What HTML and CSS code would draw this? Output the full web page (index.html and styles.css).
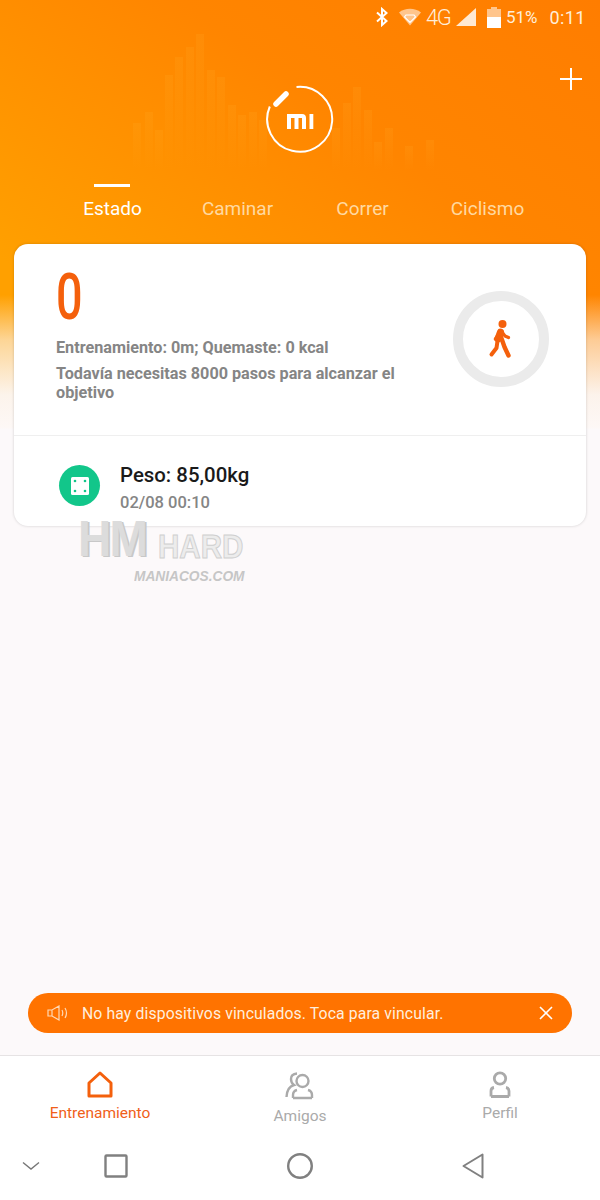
FILE: index.html
```html
<!DOCTYPE html>
<html lang="es">
<head>
    <meta charset="UTF-8">
    <title>Mi Fit - Estado</title>
    <link rel="stylesheet" href="styles.css">
</head>
<body>
    <div class="screen">
        <svg class="bars" width="600" height="200" viewBox="0 0 600 200">
            <defs>
                <linearGradient id="barFade" x1="0" y1="0" x2="0" y2="1">
                    <stop offset="0" stop-color="#ffb432" stop-opacity="0.14"/>
                    <stop offset="1" stop-color="#ffb432" stop-opacity="0"/>
                </linearGradient>
            </defs>
            <g fill="url(#barFade)">
                <rect x="133" y="123" width="8" height="47"/>
                <rect x="145" y="112" width="8" height="58"/>
                <rect x="155" y="130" width="8" height="40"/>
                <rect x="165" y="75" width="8" height="95"/>
                <rect x="175" y="57" width="8" height="113"/>
                <rect x="186" y="47" width="8" height="123"/>
                <rect x="196" y="34" width="8" height="136"/>
                <rect x="207" y="70" width="8" height="100"/>
                <rect x="217" y="77" width="8" height="93"/>
                <rect x="228" y="105" width="8" height="65"/>
                <rect x="238" y="115" width="8" height="55"/>
                <rect x="249" y="112" width="8" height="58"/>
                <rect x="259" y="120" width="8" height="50"/>
                <rect x="332" y="128" width="8" height="42"/>
                <rect x="343" y="103" width="8" height="67"/>
                <rect x="353" y="87" width="8" height="83"/>
                <rect x="364" y="110" width="8" height="60"/>
                <rect x="374" y="142" width="8" height="28"/>
                <rect x="385" y="128" width="8" height="42"/>
                <rect x="405" y="146" width="8" height="24"/>
                <rect x="426" y="140" width="8" height="30"/>
            </g>
        </svg>

        <div class="status-bar">
            <svg class="st-bt" width="14" height="20" viewBox="0 0 14 20">
                <path d="M2 5.500 11.500 14 7 18V2l4.500 4L2 14.500" fill="none" stroke="#fff" stroke-width="2"/>
            </svg>
            <svg class="st-wifi" width="22" height="18" viewBox="0 0 22 18">
                <path d="M0 4.500C6 -0.500 16 -0.500 22 4.500L11 17.500Z" fill="#ffc58c"/>
                <path d="M7 7h8l1.500 2L11 14.500 5.500 9Z" fill="none" stroke="#fff" stroke-width="1.200"/>
            </svg>
            <span class="st-net">4G</span>
            <svg class="st-signal" width="20" height="18" viewBox="0 0 20 18">
                <path d="M20 0V18H0Z" fill="#ffe9d2"/>
            </svg>
            <svg class="st-batt" width="14" height="21" viewBox="0 0 14 21">
                <path d="M4 0h6v2h4v8H0V2h4Z" fill="#ffc58c"/>
                <rect y="10" width="14" height="11" fill="#fff"/>
            </svg>
            <span class="st-pct">51%</span>
            <span class="st-time">0:11</span>
        </div>

        <div class="hero">
            <svg class="mi-logo" width="70" height="70" viewBox="0 0 70 70">
                <path d="M31.500 2.900A32.500 32.500 0 1 1 4.800 22.500" fill="none" stroke="#fff" stroke-width="2"/>
                <path d="M11 20 21 10" fill="none" stroke="#fff" stroke-width="5.500" stroke-linecap="round"/>
                <path d="M22 30h15q4 0 4 4v11h-4V34h-3.500v11h-4V34H26v11h-4Z" fill="#fff"/>
                <rect x="44.500" y="30" width="3.800" height="15" fill="#fff"/>
            </svg>
            <svg class="plus" width="22" height="22" viewBox="0 0 22 22">
                <path d="M11 0V22M0 11H22" stroke="#fff" stroke-width="2"/>
            </svg>
        </div>

        <div class="tabs">
            <div class="tab tab-active">Estado</div>
            <div class="tab">Caminar</div>
            <div class="tab">Correr</div>
            <div class="tab">Ciclismo</div>
        </div>

        <div class="card">
            <div class="card-top">
                <div class="summary">
                    <div class="steps">0</div>
                    <div class="summary-line">Entrenamiento: 0m; Quemaste: 0 kcal</div>
                    <div class="summary-goal">Todavía necesitas 8000 pasos para alcanzar el objetivo</div>
                </div>
                <div class="ring">
                    <svg width="40" height="40" viewBox="0 0 40 40">
                        <circle cx="21.500" cy="5" r="4" fill="#f4600c"/>
                        <g fill="none" stroke="#f4600c" stroke-linecap="round" stroke-linejoin="round">
                            <path d="M19.500 13 17 20" stroke-width="7"/>
                            <path d="M14.500 20 19 13.500" stroke-width="3.600"/>
                            <path d="M21 13 24 17 27.500 18.500" stroke-width="3.200"/>
                            <path d="M16.500 22 15.500 29 10.500 35.500" stroke-width="4"/>
                            <path d="M20 18 23.500 28 27.500 36.500" stroke-width="4.400"/>
                        </g>
                    </svg>
                </div>
            </div>
            <div class="card-row">
                <div class="weight-icon">
                    <svg width="20" height="20" viewBox="0 0 20 20">
                        <rect x="1" y="1" width="18" height="18" rx="1.500" fill="#fff"/>
                        <g fill="#12c68a">
                            <circle cx="5" cy="5" r="1.300"/>
                            <circle cx="15" cy="5" r="1.300"/>
                            <circle cx="5" cy="15" r="1.300"/>
                            <circle cx="15" cy="15" r="1.300"/>
                        </g>
                    </svg>
                </div>
                <div>
                    <div class="weight-value">Peso: 85,00kg</div>
                    <div class="weight-date">02/08 00:10</div>
                </div>
            </div>
        </div>

        <div class="watermark">
            <span class="wm-hm">HM</span>
            <span class="wm-hard">HARD</span>
            <span class="wm-site">MANIACOS.COM</span>
        </div>

        <div class="spacer"></div>

        <div class="notice">
            <svg width="22" height="16" viewBox="0 0 22 16">
                <path d="M1 5h4l7-4v14l-7-4H1ZM5 5v6" fill="none" stroke="#ffd9b5" stroke-width="1.200"/>
                <path d="M15 5q1.500 3 0 6M18 3q3 5 0 10" fill="none" stroke="#ffd9b5" stroke-width="1.200"/>
            </svg>
            <span class="notice-text">No hay dispositivos vinculados. Toca para vincular.</span>
            <svg class="notice-close" width="14" height="14" viewBox="0 0 14 14">
                <path d="M1 1 13 13M13 1 1 13" stroke="#fff" stroke-width="1.600"/>
            </svg>
        </div>

        <div class="bottom-nav">
            <div class="nav-item nav-active">
                <svg width="26" height="27" viewBox="0 0 26 27">
                    <path d="M13 2 24 12V25H2V12Z" fill="none" stroke="#f4600c" stroke-width="3" stroke-linejoin="round"/>
                </svg>
                <span>Entrenamiento</span>
            </div>
            <div class="nav-item nav-low">
                <svg width="30" height="29" viewBox="0 0 30 29">
                    <circle cx="17.500" cy="10" r="6" fill="none" stroke="#aaa" stroke-width="2.400"/>
                    <path d="M8 27V24q0-4 4-5M27 27V24q0-4-4-5M8 27H27" fill="none" stroke="#aaa" stroke-width="2.400"/>
                    <path d="M12 2.500Q6 3 6 8q0 4 3 6Q2 16 1.500 26" fill="none" stroke="#aaa" stroke-width="2.400"/>
                </svg>
                <span>Amigos</span>
            </div>
            <div class="nav-item">
                <svg width="22" height="27" viewBox="0 0 22 27">
                    <circle cx="11" cy="7.500" r="5.700" fill="none" stroke="#aaa" stroke-width="2.800"/>
                    <path d="M2 25.500V20q0-3 3-3.500M20 25.500V20q0-3-3-3.500M2 25.500H20" fill="none" stroke="#aaa" stroke-width="2.800"/>
                </svg>
                <span>Perfil</span>
            </div>
        </div>

        <div class="system-nav">
            <svg width="18" height="10" viewBox="0 0 18 10">
                <path d="M1 1.500 9 8 17 1.500" fill="none" stroke="#777" stroke-width="1.400"/>
            </svg>
            <svg width="24" height="24" viewBox="0 0 24 24">
                <rect x="1.500" y="1.500" width="21" height="21" rx="1" fill="none" stroke="#808080" stroke-width="2.400"/>
            </svg>
            <svg width="26" height="26" viewBox="0 0 26 26">
                <circle cx="13" cy="13" r="11.800" fill="none" stroke="#808080" stroke-width="2.400"/>
            </svg>
            <svg class="sys-back" width="22" height="26" viewBox="0 0 22 26">
                <path d="M20.500 1.500V24.500L1.500 13Z" fill="none" stroke="#808080" stroke-width="2" stroke-linejoin="round"/>
            </svg>
        </div>
    </div>
</body>
</html>
```

FILE: styles.css
```css
html, body { margin: 0; padding: 0; }
body { font-family: Roboto, "Liberation Sans", sans-serif; }

.screen {
    position: relative;
    width: 600px;
    height: 1200px;
    display: flex;
    flex-direction: column;
    overflow: hidden;
    background-color: #fcf9fa;
    background-image:
        linear-gradient(180deg, rgba(252,249,250,0) 295px, rgba(252,249,250,0.6) 340px, rgba(252,249,250,0.94) 395px, #fdf8f6 428px, #fcf9fa 429px),
        linear-gradient(to bottom left, #ff7d00 0, #ff8500 35%, #ffa000 80%);
    background-size: 100% 100%, 100% 430px;
    background-repeat: no-repeat;
}

.bars { position: absolute; left: 0; top: 0; }

/* status bar */
.status-bar { position: relative; height: 34px; display: flex; align-items: center; color: #ffeeda; }
.st-bt { margin-left: 375px; }
.st-wifi { margin-left: 10px; }
.st-net { margin-left: 5px; width: 30px; font-size: 22px; font-weight: 300; letter-spacing: -1.500px; }
.st-batt { margin-left: 11px; }
.st-pct { margin-left: 5px; font-size: 17px; }
.st-time { margin-left: 12px; font-size: 18px; letter-spacing: 0.400px; }

/* logo row */
.hero { position: relative; height: 150px; display: flex; justify-content: center; }
.mi-logo { margin-top: 50px; }
.plus { position: absolute; right: 18px; top: 34px; }

/* tabs */
.tabs { position: relative; height: 60px; padding: 0 50px; display: grid; grid-template-columns: repeat(4, 125px); }
.tab { padding-top: 15px; text-align: center; font-size: 19px; line-height: 20px; color: #ffd9a0; }
.tab-active { color: #fff; position: relative; }
.tab-active::before { content: ""; position: absolute; left: 44px; top: 0; width: 36px; height: 3px; background: #fff; }

/* card */
.card { position: relative; margin: 0 14px; height: 282px; background: #fff; border-radius: 14px; box-shadow: 0 0 3px rgba(0,0,0,0.18); }
.card-top { height: 192px; box-sizing: border-box; padding: 0 0 0 42px; display: flex; border-bottom: 1px solid #efefef; }
.summary { width: 350px; }
.steps { height: 80px; font-size: 65px; font-weight: 500; line-height: 107px; color: #f4600c; transform: scaleX(0.72); transform-origin: left; }
.summary-line, .summary-goal { font-size: 16.200px; font-weight: 700; color: #858585; line-height: 19px; }
.summary-line { margin-top: 14px; }
.summary-goal { margin-top: 7px; }
.ring { width: 76px; height: 76px; margin: 47px 0 0 47px; border: 10px solid #ebebeb; border-radius: 50%; display: flex; align-items: center; justify-content: center; }

.card-row { height: 90px; box-sizing: border-box; padding: 29px 0 0 45px; display: flex; }
.weight-icon { width: 41px; height: 41px; margin-right: 20px; border-radius: 50%; background: #12c68a; display: flex; align-items: center; justify-content: center; }
.weight-value { font-size: 20.400px; font-weight: 500; line-height: 20px; color: #1a1a1a; }
.weight-date { font-size: 16.500px; font-weight: 500; line-height: 18px; color: #858585; margin-top: 9px; }

/* site watermark */
.watermark { position: absolute; left: 78px; top: 510px; width: 170px; height: 76px; color: #dcdcdc; }
.watermark span { position: absolute; font-family: "Liberation Sans", sans-serif; font-weight: 700; white-space: nowrap; transform-origin: left; }
.wm-hm { left: 0; top: 4px; font-size: 50px; line-height: 50px; letter-spacing: -2px; transform: scaleX(0.92); text-shadow: 2px 1px 0 #c8c8c8; }
.wm-hard { left: 80px; top: 19px; font-size: 34px; line-height: 34px; transform: scaleX(0.87); color: #ececec; -webkit-text-stroke: 1px #cfcfcf; }
.wm-site { left: 56px; top: 59px; font-size: 14px; line-height: 14px; font-style: italic; color: #c6c6c6; transform: scaleX(0.98); }

.spacer { flex: 1; }

/* notice */
.notice { height: 40px; margin: 0 28px 22px; padding: 0 19px; border-radius: 20px; background: #ff7300; display: flex; align-items: center; }
.notice-text { margin-left: 13px; font-size: 15.800px; color: #ffeedd; letter-spacing: 0.100px; }
.notice-close { margin-left: auto; }

/* bottom tabs */
.bottom-nav { height: 90px; background: #fff; border-top: 1px solid #e6e3e4; display: grid; grid-template-columns: repeat(3, 200px); }
.nav-item { display: flex; flex-direction: column; align-items: center; padding-top: 15px; font-size: 15.500px; line-height: 18px; color: #aaa; }
.nav-item span { margin-top: 6px; }
.nav-active { color: #f0601a; }
.nav-low span { margin-top: 7px; }

/* android buttons */
.system-nav { flex: 1 0 54px; max-height: 54px; background: #fff; display: grid; grid-template-columns: 62px 108px 260px 1fr; align-items: center; justify-items: center; padding-bottom: 14px; box-sizing: border-box; }
.sys-back { justify-self: start; margin-left: 32px; }
```
